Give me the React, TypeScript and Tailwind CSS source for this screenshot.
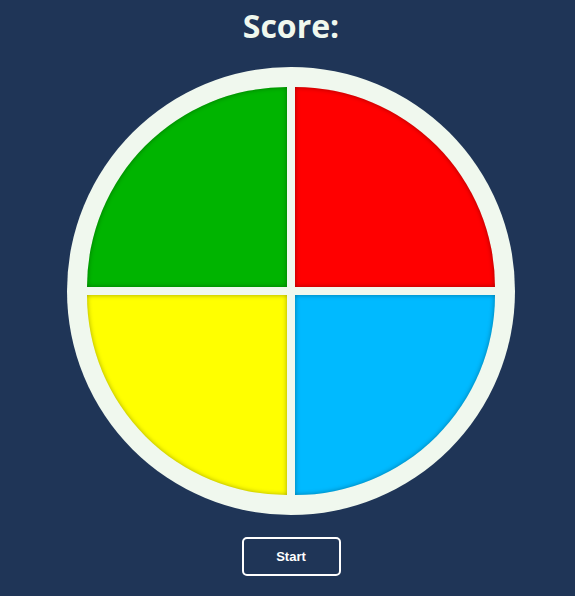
export default function App() {
  const quads = [
    { key: "green", cls: "bg-[#00b400] rounded-tl-[200px]" },
    { key: "red", cls: "bg-[#ff0000] rounded-tr-[200px]" },
    { key: "yellow", cls: "bg-[#ffff00] rounded-bl-[200px]" },
    { key: "blue", cls: "bg-[#00baff] rounded-br-[200px]" },
  ];
  return (
    <div className="min-h-[596px] w-full overflow-hidden bg-[#1f3557]">
      <div className="w-[582px] flex flex-col items-center">
        <h1 className="mt-[4px] text-[32px] leading-[44px] font-bold text-[#f0f8ee] font-['Open_Sans',sans-serif]">
          Score:
        </h1>
        <div className="mt-[19px] w-[448px] h-[448px] rounded-full bg-[#f0f8ee] p-[20px]">
          <div className="grid grid-cols-2 gap-[8px]">
            {quads.map((q) => (
              <button
                key={q.key}
                type="button"
                className={`w-[200px] h-[200px] shadow-[inset_0_0_5px_rgba(0,0,0,0.35)] ${q.cls}`}
              />
            ))}
          </div>
        </div>
        <button
          type="button"
          className="mt-[22px] w-[99px] h-[39px] rounded-[5px] border-2 border-white text-white text-[13px] font-bold font-['Liberation_Sans',Arial,sans-serif]"
        >
          Start
        </button>
      </div>
    </div>
  );
}
